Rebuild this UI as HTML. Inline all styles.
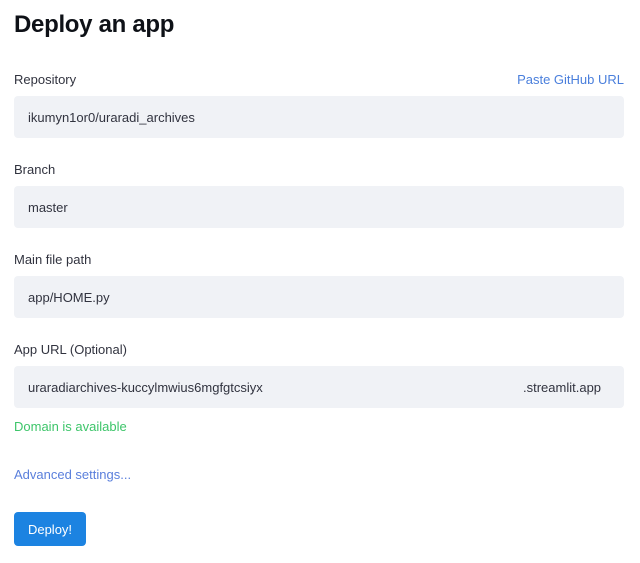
<!DOCTYPE html>
<html><head><style>
body{margin:0;width:640px;height:563px;background:#fff;font-family:"Liberation Sans",sans-serif;color:#31333f;position:relative;overflow:hidden}
.a{position:absolute}
h1{position:absolute;left:14px;top:11px;margin:0;font-size:24px;font-weight:bold;color:#0e1117;letter-spacing:-0.3px}
.l{position:absolute;left:14px;font-size:13px;color:#31333f}
.i{position:absolute;left:14px;width:610px;height:42px;background:#f0f2f6;border-radius:4px;font-size:13px;line-height:43px;color:#31333f}
.i span{position:absolute;left:14px}
</style></head><body>
<h1>Deploy an app</h1>
<div class="l" style="top:72px">Repository</div>
<div class="a" style="right:16px;top:72px;font-size:13px;color:#4a7fdc">Paste GitHub URL</div>
<div class="i" style="top:96px"><span>ikumyn1or0/uraradi_archives</span></div>
<div class="l" style="top:162px">Branch</div>
<div class="i" style="top:186px"><span>master</span></div>
<div class="l" style="top:252px">Main file path</div>
<div class="i" style="top:276px"><span>app/HOME.py</span></div>
<div class="l" style="top:342px">App URL (Optional)</div>
<div class="i" style="top:366px"><span>uraradiarchives-kuccylmwius6mgfgtcsiyx</span><span style="left:509px">.streamlit.app</span></div>
<div class="l" style="top:419px;color:#3dc56a">Domain is available</div>
<div class="l" style="top:467px;color:#5a7fdc">Advanced settings...</div>
<div class="a" style="left:14px;top:512px;width:72px;height:34px;background:#1c83e1;border-radius:4px;color:#fff;font-size:13px;line-height:35px;text-align:center">Deploy!</div>
</body></html>
